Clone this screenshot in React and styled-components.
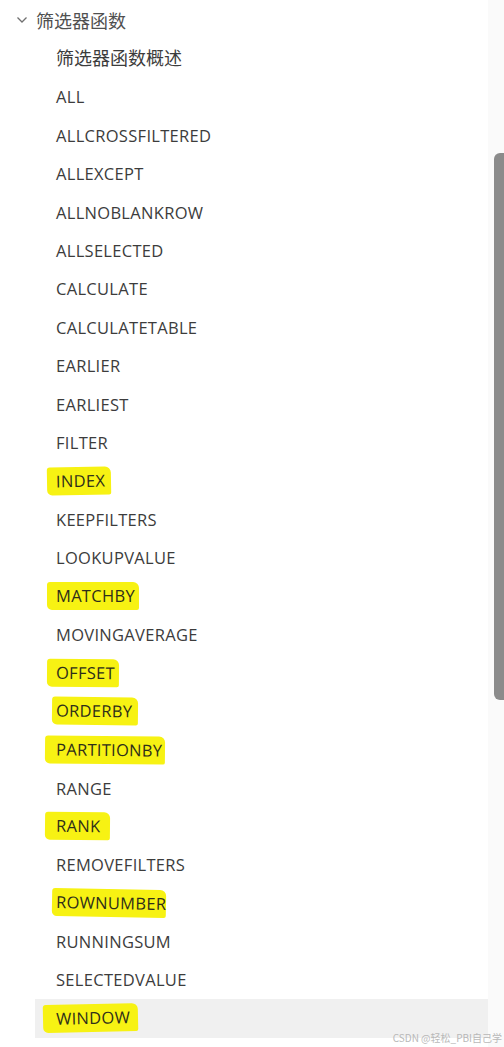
import React from "react";
import styled, { createGlobalStyle } from "styled-components";

const Global = createGlobalStyle`
  html, body { margin: 0; padding: 0; background: #ffffff; }
  body { font-family: "Open Sans", "Noto Sans CJK SC", sans-serif; }
`;

const Page = styled.div`
  width: 504px;
  height: 1047px;
  display: flex;
  overflow: hidden;
  position: relative;
`;

const List = styled.div`
  flex: 1;
  display: flex;
  flex-direction: column;
  padding-top: 1px;
`;

const Header = styled.div`
  height: 38.4px;
  display: flex;
  align-items: center;
  padding-left: 16px;
  gap: 8px;
  font-family: "Noto Sans CJK SC", sans-serif;
  font-size: 18px;
  color: #505050;
`;

const Row = styled.div`
  height: 38.4px;
  box-sizing: border-box;
  display: flex;
  align-items: center;
  margin-left: 35px;
  padding-left: 21px;
  background: ${(p) => (p.$selected ? "#f0f0f0" : "transparent")};
  font-size: 16.5px;
  letter-spacing: 0.3px;
  color: #3c3c3c;
  font-family: "Open Sans", sans-serif;
`;

const CjkRow = styled(Row)`
  font-family: "Noto Sans CJK SC", sans-serif;
  font-size: 18px;
  letter-spacing: 0;
  padding-bottom: 4px;
`;

const Mark = styled.span`
  display: inline-block;
  background: #f7f213;
  margin-left: ${(p) => -p.$l}px;
  padding: 3px ${(p) => p.$r}px 3px ${(p) => p.$l}px;
  border-radius: 3px 6px 2px 5px;
  transform: rotate(${(p) => p.$rot || 0}deg);
  line-height: 22px;
  color: #2e2e1a;
`;

const Track = styled.div`
  width: 16px;
  background: #fafafa;
  display: flex;
  justify-content: flex-end;
`;

const Thumb = styled.div`
  margin-top: 153px;
  width: 10px;
  height: 547px;
  background: #8b8b8b;
  border-radius: 6px 0 0 6px;
`;

const Watermark = styled.div`
  position: absolute;
  right: 2px;
  bottom: 2px;
  font-family: "Noto Sans CJK SC", sans-serif;
  font-size: 10px;
  color: #b8b8b8;
`;

const items = [
  ["ALL"],
  ["ALLCROSSFILTERED"],
  ["ALLEXCEPT"],
  ["ALLNOBLANKROW"],
  ["ALLSELECTED"],
  ["CALCULATE"],
  ["CALCULATETABLE"],
  ["EARLIER"],
  ["EARLIEST"],
  ["FILTER"],
  ["INDEX", 9, 6, -1],
  ["KEEPFILTERS"],
  ["LOOKUPVALUE"],
  ["MATCHBY", 9, 4, 0],
  ["MOVINGAVERAGE"],
  ["OFFSET", 9, 4, 0.5],
  ["ORDERBY", 4, 6, 0.6],
  ["PARTITIONBY", 11, 3, 0.6],
  ["RANGE"],
  ["RANK", 11, 10, 0.6],
  ["REMOVEFILTERS"],
  ["ROWNUMBER", 4, 0, 1],
  ["RUNNINGSUM"],
  ["SELECTEDVALUE"],
  ["WINDOW", 13, 8, -1.2],
];

function Chevron() {
  return (
    <svg width="12" height="8" viewBox="0 0 12 8">
      <path d="M1.5 1.5 L6 6 L10.5 1.5" fill="none" stroke="#707070" strokeWidth="1.3" />
    </svg>
  );
}

export default function App() {
  return (
    <>
      <Global />
      <Page>
        <List>
          <Header>
            <Chevron />
            <span>筛选器函数</span>
          </Header>
          <CjkRow>筛选器函数概述</CjkRow>
          {items.map(([name, l, r, rot]) => (
            <Row key={name} $selected={name === "WINDOW"}>
              {l !== undefined ? (
                <Mark $l={l} $r={r} $rot={rot}>
                  {name}
                </Mark>
              ) : (
                name
              )}
            </Row>
          ))}
        </List>
        <Track>
          <Thumb />
        </Track>
        <Watermark>CSDN @轻松_PBI自己学</Watermark>
      </Page>
    </>
  );
}
